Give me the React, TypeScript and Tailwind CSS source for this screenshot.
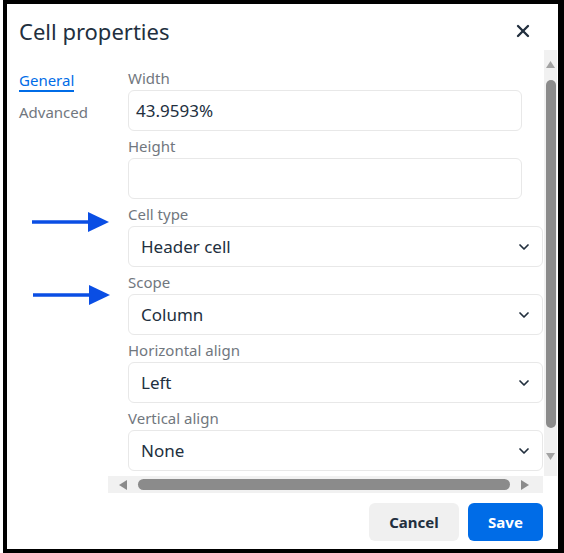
import { X, ChevronDown } from 'lucide-react';

const font = { fontFamily: '"Noto Sans", "Open Sans", sans-serif' };

function Label({ text }: { text: string }) {
  return <div className="h-[18px] text-[15px] leading-[13px] text-[#71777e]">{text}</div>;
}

function TextField({ label, value }: { label: string; value: string }) {
  return (
    <div className="flex flex-col">
      <Label text={label} />
      <div className="h-[41px] w-[394px] rounded-[6px] border border-[#e8e8e8] bg-white flex items-center px-[7px] text-[17px] text-[#222f3e]">
        {value}
      </div>
    </div>
  );
}

function SelectField({ label, value }: { label: string; value: string }) {
  return (
    <div className="flex flex-col">
      <Label text={label} />
      <div className="h-[41px] w-[415px] rounded-[6px] border border-[#e8e8e8] bg-white flex items-center justify-between pl-[12px] pr-[10px] text-[17px] text-[#222f3e]">
        <span>{value}</span>
        <ChevronDown size={16} strokeWidth={2.6} className="text-[#222f3e]" />
      </div>
    </div>
  );
}

function Arrow({ top, left }: { top: number; left: number }) {
  return (
    <svg className="absolute" style={{ top, left }} width="80" height="22" viewBox="0 0 80 22">
      <line x1="0" y1="11" x2="60" y2="11" stroke="#0a4ee4" strokeWidth="3.5" />
      <polygon points="56,1 77,11 56,21" fill="#0a4ee4" />
    </svg>
  );
}

export default function App() {
  return (
    <div className="w-[564px] h-[553px] bg-white pl-[3px]" style={font}>
      <div className="relative h-full border-[4px] border-r-[6px] border-black bg-white flex flex-col">
        {/* Header */}
        <div className="h-[46px] pt-[8px] pl-[12px] pr-[25px] flex items-center justify-between">
          <h1 className="text-[22px] text-[#222f3e]">Cell properties</h1>
          <X size={20} strokeWidth={2.8} className="text-[#222f3e]" />
        </div>

        {/* Body */}
        <div className="flex h-[443px]">
          <div className="w-[101px] pl-[12px] pt-[20px] flex flex-col gap-[10px] text-[15px] leading-[20px]">
            <div className="self-start text-[#006ce7] border-b-2 border-[#006ce7]">General</div>
            <div className="text-[#71777e]">Advanced</div>
          </div>

          <div className="flex-1 flex flex-col pr-[1px]">
            <div className="flex flex-1 min-h-0">
              <div className="flex-1 pl-[20px] pt-[22px] flex flex-col gap-[9px] overflow-hidden">
                <TextField label="Width" value="43.9593%" />
                <TextField label="Height" value="" />
                <SelectField label="Cell type" value="Header cell" />
                <SelectField label="Scope" value="Column" />
                <SelectField label="Horizontal align" value="Left" />
                <SelectField label="Vertical align" value="None" />
              </div>
              {/* Vertical scrollbar */}
              <div className="w-[13px] bg-[#f1f1f1] flex flex-col items-center">
                <svg width="9" height="8" viewBox="0 0 9 8" className="mt-[11px]">
                  <polygon points="4.5,0 9,7 0,7" fill="#a3a3a3" />
                </svg>
                <div className="mt-[11px] w-[10px] h-[348px] rounded-[5px] bg-[#8b8b8b]" />
                <svg width="9" height="8" viewBox="0 0 9 8" className="mt-[25px]">
                  <polygon points="0,0 9,0 4.5,7" fill="#a3a3a3" />
                </svg>
              </div>
            </div>
            {/* Horizontal scrollbar */}
            <div className="h-[17px] w-[435px] bg-[#f1f1f1] flex items-center pl-[11px]">
              <svg width="8" height="10" viewBox="0 0 8 10">
                <polygon points="8,0 8,10 0,5" fill="#8b8b8b" />
              </svg>
              <div className="ml-[11px] w-[372px] h-[11px] rounded-[6px] bg-[#8b8b8b]" />
              <svg width="8" height="10" viewBox="0 0 8 10" className="ml-[11px]">
                <polygon points="0,0 0,10 8,5" fill="#8b8b8b" />
              </svg>
            </div>
          </div>
        </div>

        {/* Footer */}
        <div className="flex-1 flex justify-end items-start pt-[10px] pr-[15px] gap-[9px]">
          <button className="h-[38px] w-[90px] rounded-[6px] bg-[#f0f0f0] text-[15px] font-bold text-[#222f3e]">
            Cancel
          </button>
          <button className="h-[38px] w-[75px] rounded-[6px] bg-[#006ce7] text-[15px] font-bold text-white">
            Save
          </button>
        </div>

        {/* Annotation arrows */}
        <Arrow top={207} left={25} />
        <Arrow top={280} left={26} />
      </div>
    </div>
  );
}
